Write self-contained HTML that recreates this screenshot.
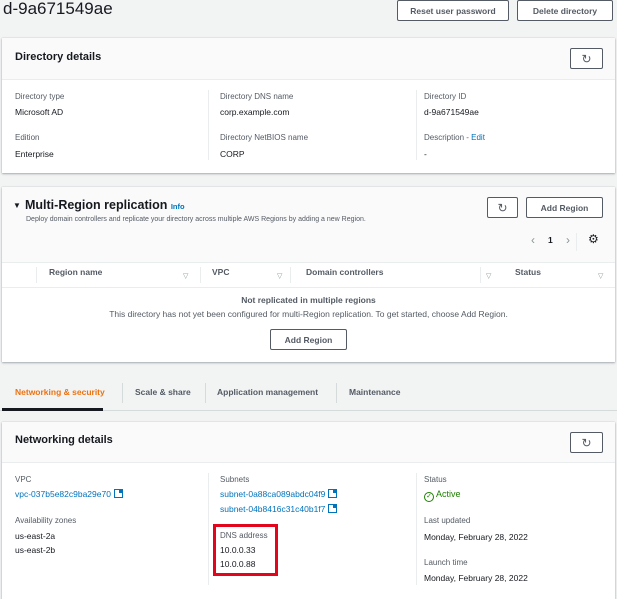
<!DOCTYPE html>
<html><head><meta charset="utf-8"><style>
*{margin:0;padding:0;box-sizing:border-box}
body{width:617px;height:599px;background:#f2f3f3;font-family:"Liberation Sans",sans-serif;color:#16191f;position:relative;overflow:hidden;font-size:8.5px}
.a{position:absolute;white-space:nowrap}
.card{position:absolute;background:#fff;box-shadow:0 1px 2px rgba(0,28,36,.3),0 0 1px rgba(0,28,36,.2)}
.hdr{position:absolute;left:0;right:0;top:0;background:#fafafa;border-bottom:1px solid #eaeded}
.btn{position:absolute;border:1px solid #545b64;background:#fff;border-radius:2px;font-weight:bold;font-size:8.5px;color:#545b64;display:flex;align-items:center;justify-content:center}
.lbl{color:#545b64;font-size:8px}
.lnk{color:#0073bb}
.vd{position:absolute;width:1px;background:#eaeded}
.ttl{font-weight:bold;font-size:11px}
.ext{display:inline-block;width:9px;height:9px;border:1.5px solid #0073bb;vertical-align:-1px;margin-left:3px;position:relative}
.ext:after{content:"";position:absolute;right:-1px;top:-1px;width:4px;height:4px;background:#0073bb}
.th{font-weight:bold;color:#545b64;font-size:8.5px}
.sort{color:#879596;font-size:7px}
.rf{font-weight:normal;font-size:12px;color:#545b64}
</style></head><body>
<div class="a" style="left:3px;top:-1px;font-size:17px;">d-9a671549ae</div>
<div class="btn" style="left:397px;top:0;width:112px;height:21px">Reset user password</div>
<div class="btn" style="left:517px;top:0;width:96px;height:21px">Delete directory</div>

<div class="card" style="left:2px;top:38px;width:613px;height:135px">
<div class="hdr" style="height:42px"></div>
<div class="a ttl" style="left:13px;top:13px">Directory details</div>
<div class="btn rf" style="left:568px;top:10px;width:33px;height:21px">↻</div>
<div class="vd" style="left:206px;top:52px;height:70px"></div>
<div class="vd" style="left:414px;top:52px;height:70px"></div>
<div class="a lbl" style="left:13px;top:54px">Directory type</div>
<div class="a" style="left:13px;top:69px">Microsoft AD</div>
<div class="a lbl" style="left:13px;top:95px">Edition</div>
<div class="a" style="left:13px;top:111px">Enterprise</div>
<div class="a lbl" style="left:218px;top:54px">Directory DNS name</div>
<div class="a" style="left:218px;top:69px">corp.example.com</div>
<div class="a lbl" style="left:218px;top:95px">Directory NetBIOS name</div>
<div class="a" style="left:218px;top:111px">CORP</div>
<div class="a lbl" style="left:422px;top:54px">Directory ID</div>
<div class="a" style="left:422px;top:69px">d-9a671549ae</div>
<div class="a lbl" style="left:422px;top:95px">Description - <span class="lnk">Edit</span></div>
<div class="a" style="left:422px;top:111px">-</div>
</div>

<div class="card" style="left:2px;top:187px;width:613px;height:175px">
<div class="hdr" style="height:76px"></div>
<div class="a" style="left:11px;top:14px;font-size:8px">▼</div>
<div class="a" style="left:23px;top:11px;font-weight:bold;font-size:12.5px">Multi-Region replication <span class="lnk" style="font-size:7.5px">Info</span></div>
<div class="a" style="left:24px;top:29px;font-size:7px;color:#545b64">Deploy domain controllers and replicate your directory across multiple AWS Regions by adding a new Region.</div>
<div class="btn rf" style="left:485px;top:10px;width:31px;height:21px">↻</div>
<div class="btn" style="left:524px;top:10px;width:77px;height:21px">Add Region</div>
<div class="a" style="left:529px;top:46px;color:#879596;font-size:12px">‹</div>
<div class="a" style="left:546px;top:48px;font-weight:bold">1</div>
<div class="a" style="left:564px;top:46px;color:#879596;font-size:12px">›</div>
<div class="vd" style="left:574px;top:46px;height:18px"></div>
<div class="a" style="left:586px;top:45px;font-size:12px;color:#16191f">⚙</div>
<div class="a" style="left:0;top:100px;height:0;border-top:1px solid #eaeded;width:613px"></div>
<div class="vd" style="left:34px;top:80px;height:16px"></div>
<div class="vd" style="left:198px;top:80px;height:16px"></div>
<div class="vd" style="left:288px;top:80px;height:16px"></div>
<div class="vd" style="left:478px;top:80px;height:16px"></div>
<div class="a th" style="left:47px;top:80px">Region name</div>
<div class="a th" style="left:210px;top:80px">VPC</div>
<div class="a th" style="left:304px;top:80px">Domain controllers</div>
<div class="a th" style="left:513px;top:80px">Status</div>
<div class="a sort" style="left:181px;top:85px">▽</div>
<div class="a sort" style="left:275px;top:85px">▽</div>
<div class="a sort" style="left:484px;top:85px">▽</div>
<div class="a sort" style="left:596px;top:85px">▽</div>
<div class="a" style="left:0;width:613px;text-align:center;top:108px;font-weight:bold;color:#545b64">Not replicated in multiple regions</div>
<div class="a" style="left:0;width:613px;text-align:center;top:122px;color:#545b64">This directory has not yet been configured for multi-Region replication. To get started, choose Add Region.</div>
<div class="btn" style="left:268px;top:142px;width:77px;height:21px">Add Region</div>
</div>

<div class="a" style="left:0;top:410px;width:617px;border-top:1px solid #d5dbdb"></div>
<div class="a" style="left:2px;top:408px;width:101px;height:3px;background:#16191f"></div>
<div class="a" style="left:15px;top:387px;font-weight:bold;color:#ec7211">Networking &amp; security</div>
<div class="vd" style="left:122px;top:383px;height:20px;background:#d5dbdb"></div>
<div class="a" style="left:135px;top:387px;font-weight:bold;color:#545b64">Scale &amp; share</div>
<div class="vd" style="left:205px;top:383px;height:20px;background:#d5dbdb"></div>
<div class="a" style="left:217px;top:387px;font-weight:bold;color:#545b64">Application management</div>
<div class="vd" style="left:336px;top:383px;height:20px;background:#d5dbdb"></div>
<div class="a" style="left:349px;top:387px;font-weight:bold;color:#545b64">Maintenance</div>

<div class="card" style="left:2px;top:422px;width:613px;height:177px">
<div class="hdr" style="height:41px"></div>
<div class="a ttl" style="left:13px;top:12px">Networking details</div>
<div class="btn rf" style="left:568px;top:10px;width:33px;height:21px">↻</div>
<div class="vd" style="left:206px;top:51px;height:112px"></div>
<div class="vd" style="left:414px;top:51px;height:112px"></div>
<div class="a lbl" style="left:13px;top:53px">VPC</div>
<div class="a lnk" style="left:13px;top:67px">vpc-037b5e82c9ba29e70<span class="ext"></span></div>
<div class="a lbl" style="left:13px;top:94px">Availability zones</div>
<div class="a" style="left:13px;top:109px">us-east-2a</div>
<div class="a" style="left:13px;top:123px">us-east-2b</div>
<div class="a lbl" style="left:218px;top:53px">Subnets</div>
<div class="a lnk" style="left:218px;top:67px">subnet-0a88ca089abdc04f9<span class="ext"></span></div>
<div class="a lnk" style="left:218px;top:82px">subnet-04b8416c31c40b1f7<span class="ext"></span></div>
<div class="a" style="left:211px;top:102px;width:65px;height:52px;border:3px solid #e3051b"></div>
<div class="a lbl" style="left:218px;top:109px">DNS address</div>
<div class="a" style="left:218px;top:123px">10.0.0.33</div>
<div class="a" style="left:218px;top:137px">10.0.0.88</div>
<div class="a lbl" style="left:422px;top:53px">Status</div>
<div class="a" style="left:422px;top:67px;color:#1d8102;font-size:9px"><span style="display:inline-block;width:10px;height:10px;border:1.3px solid #1d8102;border-radius:50%;font-size:7px;line-height:8px;text-align:center;vertical-align:-1px">✓</span> Active</div>
<div class="a lbl" style="left:422px;top:94px">Last updated</div>
<div class="a" style="left:422px;top:110px">Monday, February 28, 2022</div>
<div class="a lbl" style="left:422px;top:136px">Launch time</div>
<div class="a" style="left:422px;top:151px">Monday, February 28, 2022</div>
</div>
</body></html>
